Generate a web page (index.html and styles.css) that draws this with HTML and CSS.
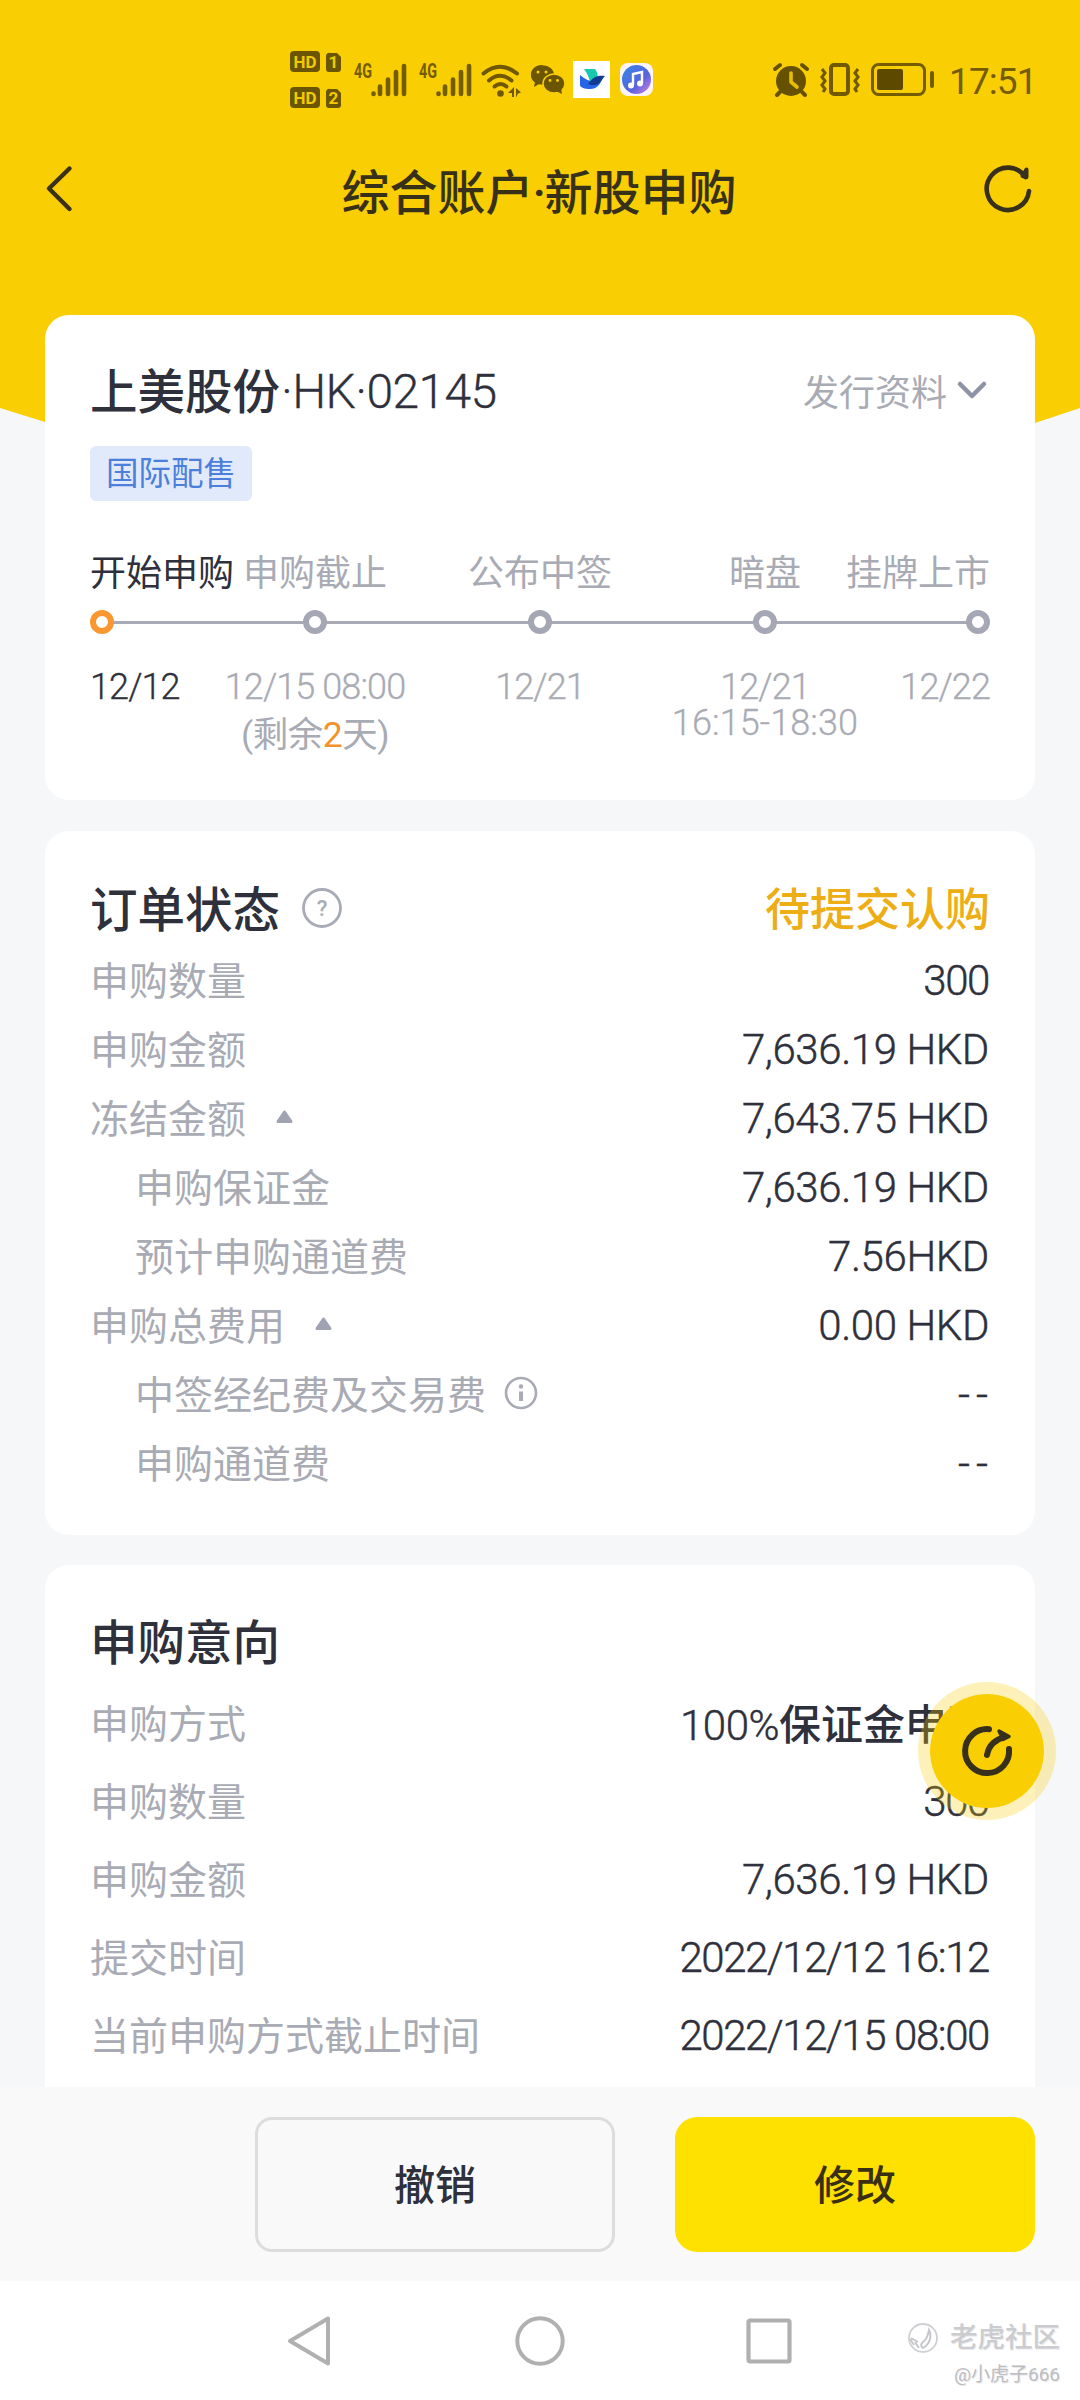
FILE: index.html
```html
<!DOCTYPE html>
<html lang="zh-CN">
<head>
<meta charset="utf-8">
<title>综合账户·新股申购</title>
<link rel="stylesheet" href="styles.css">
</head>
<body>
<div class="screen">
  <header class="top">
    <div class="status">
      <div class="hd-stack">
        <svg width="52" height="22" viewBox="0 0 52 22"><rect width="30" height="21" rx="4" fill="#6b5500"/><text class="hd" x="15" y="16.500" textLength="23" lengthAdjust="spacingAndGlyphs">HD</text><path d="M40 2h7l4 4v12a3 3 0 0 1-3 3h-9a3 3 0 0 1-3-3V5a3 3 0 0 1 4-3z" fill="#6b5500"/><text class="hd" x="43.500" y="17">1</text></svg>
        <svg width="52" height="22" viewBox="0 0 52 22"><rect width="30" height="21" rx="4" fill="#6b5500"/><text class="hd" x="15" y="16.500" textLength="23" lengthAdjust="spacingAndGlyphs">HD</text><path d="M40 2h7l4 4v12a3 3 0 0 1-3 3h-9a3 3 0 0 1-3-3V5a3 3 0 0 1 4-3z" fill="#6b5500"/><text class="hd" x="43.500" y="17">2</text></svg>
      </div>
      <svg class="signal" width="54" height="36" viewBox="0 0 54 36"><text class="net" x="1" y="16" textLength="18" lengthAdjust="spacingAndGlyphs">4G</text><path d="M20.500 31.500v.5M27 24.500v7.500M35 17.500v14.500M43 10v22M51 4v28" stroke="#745c00" stroke-width="4.600" stroke-linecap="round"/></svg>
      <svg class="signal second" width="54" height="36" viewBox="0 0 54 36"><text class="net" x="1" y="16" textLength="18" lengthAdjust="spacingAndGlyphs">4G</text><path d="M20.500 31.500v.5M27 24.500v7.500M35 17.500v14.500M43 10v22M51 4v28" stroke="#745c00" stroke-width="4.600" stroke-linecap="round"/></svg>
      <svg class="wifi" width="42" height="36" viewBox="0 0 42 36"><g fill="none" stroke="#6f5800" stroke-width="4" stroke-linecap="round"><path d="M2.500 10.500Q19 -3 36 10.500"/><path d="M8 17.500Q19 8 30.500 17.500"/><path d="M13.500 23.500Q19.500 18.500 25.500 23.500"/></g><circle cx="19.500" cy="30.500" r="3.300" fill="#6f5800"/><path d="M27 30l6-6v10h-2v-4zM35 25l5 4.500-3 1-2 4z" fill="#6f5800"/></svg>
      <svg class="wechat" width="34" height="30" viewBox="0 0 34 30"><path d="M11 0C5 0 0 4 0 9.800c0 3 1.500 5.500 4 7.400L3 22l5-3h3z" fill="#6b5500"/><ellipse cx="11.500" cy="10" rx="11.500" ry="9.800" fill="#6b5500"/><ellipse cx="23" cy="18.500" rx="11" ry="9.500" fill="#6b5500" stroke="#f9ce02" stroke-width="1.500"/><path d="M25 26l6 3-1-6z" fill="#6b5500"/><g fill="#f9ce02"><circle cx="7" cy="7" r="1.500"/><circle cx="15" cy="7" r="1.500"/><circle cx="19" cy="15.500" r="1.400"/><circle cx="26.500" cy="15.500" r="1.400"/></g></svg>
      <svg class="bird" width="37" height="37" viewBox="0 0 37 37"><path fill="#fff" d="M0 0h37v37H0z"/><path d="M11 8h11c3 4 3 7 2 9l-7 4c-1-5-3-9-6-13z" fill="#17c9ae"/><path d="M7 14c5 4 9 6 14 7l9-4c-3 6-6 12-15 11-5-.5-8-2-8-4z" fill="#2465e8"/><path d="M15 23c5-7 9-9 17-8-4 4-5 9-11 9-2 0-4 0-6-1z" fill="#123a91"/></svg>
      <svg class="music" width="33" height="33" viewBox="0 0 33 33"><defs><linearGradient id="m" x1="0" y1="0" x2="1" y2="1"><stop stop-color="#3489e6"/><stop offset=".6" stop-color="#5963dc"/><stop offset="1" stop-color="#d985e5"/></linearGradient></defs><rect width="33" height="33" rx="8" fill="#fbf5fa"/><circle cx="16.500" cy="16.500" r="14.500" fill="url(#m)"/><path d="M13 22V11l9-2v11" fill="none" stroke="#fff" stroke-width="2.400"/><circle cx="11" cy="22.500" r="3" fill="#fff"/><circle cx="20" cy="20.500" r="3" fill="#fff"/></svg>
      <svg class="alarm" width="36" height="34" viewBox="0 0 36 34"><circle cx="18" cy="18" r="15" fill="#665100"/><path d="M2 6l5-4M34 6l-5-4M7 29l-3 3M29 29l3 3" stroke="#665100" stroke-width="4" stroke-linecap="round"/><path d="M18 10v9l6 5" fill="none" stroke="#e6be02" stroke-width="3.600" stroke-linecap="round" stroke-linejoin="round"/></svg>
      <svg class="vibrate" width="40" height="34" viewBox="0 0 40 34"><g fill="none" stroke="#705900" stroke-width="4"><rect x="11" y="2" width="17" height="29" rx="3"/><path d="M2 6l3 4-3 4 3 4-3 4 3 4-2 3M38 6l-3 4 3 4-3 4 3 4-3 4 2 3" stroke-width="3"/></g></svg>
      <svg class="battery" width="64" height="34" viewBox="0 0 64 34"><rect x="1.500" y="1.500" width="52" height="30" rx="6" fill="none" stroke="#745c00" stroke-width="3"/><rect x="6" y="6" width="26" height="21" rx="2" fill="#5d4a00"/><rect x="59" y="8" width="4" height="17" rx="2" fill="#745c00"/></svg>
      <span class="clock">17:51</span>
    </div>
    <nav class="titlebar">
      <svg width="28" height="46" viewBox="0 0 28 46"><path d="M24.500 2.500L4 22.500l20.500 20.500" fill="none" stroke="#3a3118" stroke-width="4.400" stroke-linecap="round" stroke-linejoin="round"/></svg>
      <h1>综合账户<i>·</i>新股申购</h1>
      <svg width="48" height="48" viewBox="0 0 48 48"><path d="M44 26A21.200 21.200 0 1 1 40.500 12" fill="none" stroke="#36301d" stroke-width="4.600" stroke-linecap="round"/><path d="M41.500 4.500v7.500l-4-1z" fill="#303044" stroke="#36301d" stroke-width="4" stroke-linejoin="round"/></svg>
    </nav>
  </header>

  <main class="content">
    <section class="card stock">
      <div class="head">
        <h2><span class="name">上美股份</span><span class="code">·HK·02145</span></h2>
        <a class="more"><span>发行资料</span><svg width="30" height="20" viewBox="0 0 30 20"><path d="M3 3l12 12L27 3" fill="none" stroke="#8e93a5" stroke-width="4.500" stroke-linecap="round" stroke-linejoin="round"/></svg></a>
      </div>
      <span class="tag">国际配售</span>
      <div class="timeline">
        <div class="step active"><b>开始申购</b><i></i><span>12/12</span></div>
        <div class="step"><b>申购截止</b><i></i><span>12/15 08:00</span><em>(剩余<strong>2</strong>天)</em></div>
        <div class="step"><b>公布中签</b><i></i><span>12/21</span></div>
        <div class="step"><b>暗盘</b><i></i><span>12/21</span><span class="hours">16:15-18:30</span></div>
        <div class="step last"><b>挂牌上市</b><i></i><span>12/22</span></div>
      </div>
    </section>

    <section class="card order">
      <div class="head">
        <h2>订单状态<svg class="help" width="40" height="40" viewBox="0 0 40 40"><circle cx="20" cy="20" r="18.500" fill="none" stroke="#a8abb6" stroke-width="2.800"/><text x="20" y="28" class="qmark">?</text></svg></h2>
        <span class="state">待提交认购</span>
      </div>
      <div class="row"><span>申购数量</span><span class="num">300</span></div>
      <div class="row"><span>申购金额</span><span class="num hkd">7,636.19 HKD</span></div>
      <div class="row"><span>冻结金额<svg class="caret" width="17" height="15" viewBox="0 0 17 15"><path d="M8.500 3L15 12.500H2z" fill="#9fa3b2" stroke="#9fa3b2" stroke-width="3" stroke-linejoin="round"/></svg></span><span class="num hkd">7,643.75 HKD</span></div>
      <div class="row sub"><span>申购保证金</span><span class="num hkd">7,636.19 HKD</span></div>
      <div class="row sub"><span>预计申购通道费</span><span class="num hkd">7.56HKD</span></div>
      <div class="row"><span>申购总费用<svg class="caret" width="17" height="15" viewBox="0 0 17 15"><path d="M8.500 3L15 12.500H2z" fill="#9fa3b2" stroke="#9fa3b2" stroke-width="3" stroke-linejoin="round"/></svg></span><span class="num hkd">0.00 HKD</span></div>
      <div class="row sub"><span>中签经纪费及交易费<svg class="info" width="34" height="34" viewBox="0 0 34 34"><circle cx="17" cy="17" r="15" fill="none" stroke="#a8abb6" stroke-width="2.600"/><path d="M17 15.500V25" stroke="#a8abb6" stroke-width="4"/><circle cx="17" cy="10.500" r="2.200" fill="#a8abb6"/></svg></span><span class="num dash">--</span></div>
      <div class="row sub"><span>申购通道费</span><span class="num dash">--</span></div>
    </section>

    <section class="card intent">
      <div class="head"><h2>申购意向</h2></div>
      <div class="row"><span>申购方式</span><span class="num ratio">100%<b>保证金申购</b></span></div>
      <div class="row"><span>申购数量</span><span class="num">300</span></div>
      <div class="row"><span>申购金额</span><span class="num hkd">7,636.19 HKD</span></div>
      <div class="row"><span>提交时间</span><span class="num">2022/12/12 16:12</span></div>
      <div class="row"><span>当前申购方式截止时间</span><span class="num">2022/12/15 08:00</span></div>
    </section>
  </main>

  <footer class="actions">
    <button class="btn cancel">撤销</button>
    <button class="btn modify">修改</button>
  </footer>

  <div class="sysnav">
    <svg width="46" height="52" viewBox="0 0 46 52"><path d="M42 3.500v45L4 26z" fill="none" stroke="#b0b0b0" stroke-width="4" stroke-linejoin="round"/></svg>
    <svg width="52" height="52" viewBox="0 0 52 52"><circle cx="26" cy="26" r="22.700" fill="none" stroke="#b0b0b0" stroke-width="4"/></svg>
    <svg width="46" height="46" viewBox="0 0 46 46"><rect x="2.500" y="2.500" width="41" height="41" rx="1.500" fill="none" stroke="#b0b0b0" stroke-width="4.200"/></svg>
  </div>

  <div class="fab"><svg width="56" height="56" viewBox="0 0 56 56"><g fill="none" stroke="#37301a" stroke-width="6" stroke-linecap="round" stroke-linejoin="round"><path d="M30 6.200A22 22 0 1 0 50 26"/><path d="M28 32C30 21 37 17 45 14"/></g><path d="M40 8l10 5.500-6 3z" fill="#37301a" stroke="#37301a" stroke-width="3.500" stroke-linejoin="round"/></svg></div>

  <div class="watermark">
    <div class="brand"><svg width="32" height="32" viewBox="0 0 32 32"><circle cx="16" cy="16" r="14" fill="none" stroke="#cfd0d3" stroke-width="1.800"/><path d="M22 8c3 6 1 14-6 18-3-2-2-5 1-7s4-6 5-11zM3 17l4 6M8 20l4 6M4 16l7 4" fill="none" stroke="#c5c7cb" stroke-width="2"/></svg><span>老虎社区</span></div>
    <small>@小虎子666</small>
  </div>
</div>
</body>
</html>
```
FILE: styles.css
```css
* { box-sizing: border-box; }
body { margin: 0; font-family: Roboto, "Noto Sans CJK SC", sans-serif; color: #2e303b; }
svg { display: block; flex: none; overflow: visible; }
h1, h2 { margin: 0; font-weight: 500; white-space: nowrap; }
i, em { font-style: normal; }

.screen { position: relative; width: 1080px; height: 2400px; overflow: hidden; display: flex; flex-direction: column; background: #f6f7f9; }

/* Yellow header whose lower edge slopes away behind the first card */
.top { flex: none; height: 424px; margin-bottom: -109px; background: #f9ce02; clip-path: polygon(0 0, 100% 0, 100% 408px, 1035px 423px, 45px 422px, 0 408px); }
.status { height: 140px; padding: 49px 40px 0 290px; display: flex; align-items: flex-start; }
.hd-stack { display: flex; flex-direction: column; gap: 14px; padding-top: 2px; }
.hd { font: 700 17px Roboto, sans-serif; fill: #f3c900; text-anchor: middle; }
.net { font: 700 20px Roboto, sans-serif; fill: #745c00; }
.signal { margin: 13px 0 0 11px; }
.signal.second { margin-left: 11px; }
.wifi { margin: 14px 0 0 9px; }
.wechat { margin: 16px 0 0 8px; }
.bird { margin: 12px 0 0 8px; }
.music { margin: 14px 0 0 10px; }
.alarm { margin: 14px 0 0 120px; }
.vibrate { margin: 14px 0 0 11px; }
.battery { margin: 14px 0 0 11px; }
.clock { margin: 12px 0 0 14px; font-size: 37px; line-height: 42px; letter-spacing: -.9px; color: #745c00; white-space: nowrap; }

.titlebar { height: 104px; padding: 0 47px 0 45px; display: flex; align-items: center; justify-content: space-between; margin-top: -3px; }
.titlebar h1 { font-size: 48px; line-height: 60px; color: #38311a; padding-left: 20px; margin-top: 10px; }
.titlebar h1 i { display: inline-block; width: 11px; text-align: center; text-indent: -1px; }

.content { position: relative; flex: none; height: 1772px; padding: 0 45px; display: flex; flex-direction: column; gap: 30px; overflow: hidden; }
.card { flex: none; background: #fff; border-radius: 24px; padding: 0 45px; }
.head { display: flex; justify-content: space-between; align-items: center; }
.head h2 { font-size: 47.500px; display: flex; align-items: center; }

.stock { height: 485px; padding-top: 45px; }
.stock .head { height: 62px; }
.name { margin-top: -6px; }
.code { font-weight: 300; font-size: 48px; letter-spacing: -.6px; margin-left: 1px; -webkit-text-stroke: .3px; }
.more { display: flex; align-items: center; font-size: 36px; color: #a9abb4; gap: 10px; padding-right: 3px; }
.more span { margin-top: -2px; }
.tag { display: block; width: 162px; height: 55px; margin-top: 24px; border-radius: 6px; background: #e1eafb; color: #4c7fdc; font-size: 32.500px; line-height: 57px; text-align: center; }

.timeline { position: relative; display: grid; grid-template-columns: 112.500px 225px 225px 225px 112.500px; margin-top: 45px; }
.timeline::before { content: ""; position: absolute; left: 12px; right: 12px; top: 75px; height: 3px; background: #a8abb6; }
.step { position: relative; display: flex; flex-direction: column; align-items: center; color: #a9abb4; white-space: nowrap; font-size: 36px; }
.step:first-child { align-items: flex-start; }
.step.last { align-items: flex-end; }
.step b { font-weight: 400; line-height: 56px; height: 64px; }
.step i { width: 24px; height: 24px; border: 6px solid #a5a8b4; border-radius: 50%; background: #fff; }
.step span { font-size: 36px; line-height: 36px; margin-top: 35px; letter-spacing: -.9px; font-weight: 300; -webkit-text-stroke: .3px; }
.step .hours { margin-top: 0; letter-spacing: .1px; }
.step em { line-height: 46px; margin-top: 7px; font-size: 35.500px; letter-spacing: -.5px; }
.step strong { font-weight: 400; color: #f2922c; }
.step.active { color: #2e303b; }
.step.active i { border-color: #fa9730; }

.order { height: 704px; padding-top: 45px; margin-top: 1px; }
.order .head { height: 70px; }
.order h2, .state { position: relative; top: -5px; }
.help { margin: 4px 0 0 22px; }
.qmark { font: 500 22px Roboto, sans-serif; fill: #a8abb6; text-anchor: middle; }
.state { font-size: 45px; font-weight: 500; color: #edad15; }
.row { display: flex; justify-content: space-between; align-items: center; height: 69px; font-size: 39px; color: #a9abb4; white-space: nowrap; }
.row > span:first-child { display: flex; align-items: center; margin-top: -5px; }
.row.sub { padding-left: 45px; }
.caret { margin-left: 30px; }
.info { margin: 2px 0 0 18px; }
.num { font-size: 42px; color: #2e303b; font-weight: 300; letter-spacing: -1.400px; margin-right: 1px; -webkit-text-stroke: .45px; }
.num.hkd { letter-spacing: -.4px; }
.num.dash { letter-spacing: 6px; margin-right: -4px; }
.num.ratio { letter-spacing: -.5px; margin-top: -5px; }
.num b { font-weight: 500; letter-spacing: 0; -webkit-text-stroke: 0; }

.intent { height: 620px; padding-top: 42px; }
.intent .head { height: 68px; }
.intent h2 { margin-top: -4px; }
.intent .row { height: 77.800px; }
.intent .head + .row { margin-top: 10px; }

.actions { flex: none; height: 194px; padding: 30px 45px 0 255px; display: flex; gap: 60px; background: #f9f9f9; }
.btn { width: 360px; height: 135px; border-radius: 22px; border: 0; font: 500 41px Roboto, "Noto Sans CJK SC", sans-serif; color: #2e303b; padding: 0 0 5px; }
.cancel { background: #f9f9f9; border: 3px solid #dcdddf; border-radius: 17px; }
.modify { background: #ffe100; color: #392f14; }

.sysnav { flex: 1; background: #fff; display: flex; align-items: center; padding: 0 0 0 286px; }
.sysnav svg:nth-child(2) { margin-left: 182px; }
.sysnav svg:nth-child(3) { margin-left: 180px; }

.fab { position: absolute; left: 918px; top: 1682px; width: 138px; height: 138px; border: 12px solid rgba(249, 206, 2, .28); border-radius: 50%; background: #f9ce02; background-clip: padding-box; display: flex; align-items: center; justify-content: center; }

.watermark { position: absolute; right: 20px; top: 2319px; display: flex; flex-direction: column; align-items: flex-end; color: #cbccd0; text-shadow: 1px 1px 0 #e9e9eb; white-space: nowrap; }
.brand { display: flex; align-items: center; gap: 11px; font-size: 27.500px; line-height: 38px; font-weight: 500; }
.watermark small { font-size: 19px; line-height: 24px; margin-top: 6px; color: #bcbdc0; }
```
